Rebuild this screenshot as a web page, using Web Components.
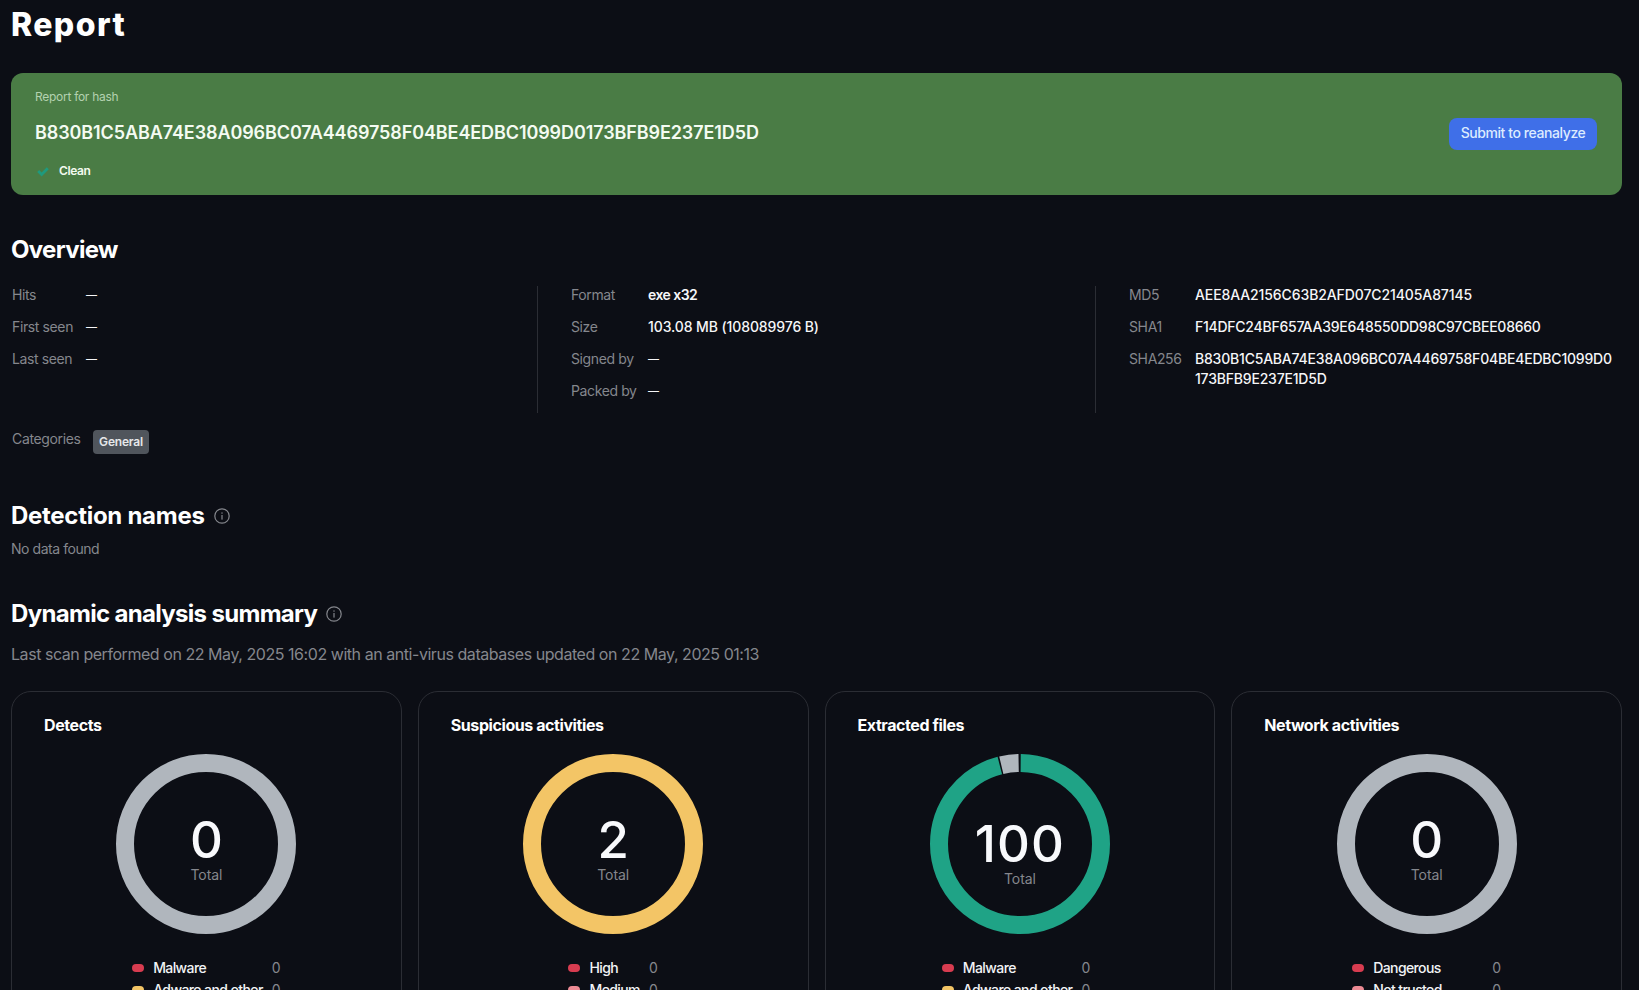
<!DOCTYPE html>
<html lang="en">
<head>
<meta charset="utf-8">
<title>Report</title>
<style>
  html, body { margin: 0; height: 990px; overflow: hidden; background: #0c0e15; }
  body { font-family: Inter, "Liberation Sans", sans-serif; color: #fff; }
</style>
</head>
<body>
<report-page>
  <report-banner slot="banner" hash="B830B1C5ABA74E38A096BC07A4469758F04BE4EDBC1099D0173BFB9E237E1D5D" status="Clean"></report-banner>

  <section-head style="--top:39px;--sp:-.68px">Overview</section-head>
  <kv-grid>
    <kv-col width="74" pad="1">
      <kv-row label="Hits" dash>—</kv-row>
      <kv-row label="First seen" dash>—</kv-row>
      <kv-row label="Last seen" dash>—</kv-row>
    </kv-col>
    <kv-col width="77" pad="33" divider>
      <kv-row label="Format" style="--sp:-.55px;--w:600">exe x32</kv-row>
      <kv-row label="Size">103.08 MB (108089976 B)</kv-row>
      <kv-row label="Signed by" dash>—</kv-row>
      <kv-row label="Packed by" dash>—</kv-row>
    </kv-col>
    <kv-col width="66" pad="33" divider>
      <kv-row label="MD5">AEE8AA2156C63B2AFD07C21405A87145</kv-row>
      <kv-row label="SHA1" style="--sp:-.25px">F14DFC24BF657AA39E648550DD98C97CBEE08660</kv-row>
      <kv-row label="SHA256" style="--sp:-.2px">B830B1C5ABA74E38A096BC07A4469758F04BE4EDBC1099D0<br>173BFB9E237E1D5D</kv-row>
    </kv-col>
  </kv-grid>
  <category-row label="Categories" tag="General"></category-row>

  <section-head info style="--top:46px;--sp:-.28px">Detection names</section-head>
  <muted-line style="--top:6.5px;--size:14px;--lh:20px;--sp:-.45px">No data found</muted-line>

  <section-head info style="--top:39px;--sp:-.68px">Dynamic analysis summary</section-head>
  <muted-line style="--top:12.5px;--size:16px;--lh:24px;--sp:-.45px">Last scan performed on 22 May, 2025 16:02 with an anti-virus databases updated on 22 May, 2025 01:13</muted-line>

  <card-grid>
    <stat-card heading="Detects">
      <donut-chart value="0" segments="#b0b6bd:0:360"></donut-chart>
      <legend-row color="#d83c50" label="Malware" value="0"></legend-row>
      <legend-row color="#f3c566" label="Adware and other" value="0"></legend-row>
    </stat-card>
    <stat-card heading="Suspicious activities">
      <donut-chart value="2" segments="#f3c566:0:360"></donut-chart>
      <legend-row color="#d83c50" label="High" value="0"></legend-row>
      <legend-row color="#ec8a94" label="Medium" value="0"></legend-row>
    </stat-card>
    <stat-card heading="Extracted files" value-min="16.5">
      <donut-chart value="100" shift segments="#1fa386:0.5:345.5,#b0b6bd:346.6:359"></donut-chart>
      <legend-row color="#d83c50" label="Malware" value="0"></legend-row>
      <legend-row color="#f3c566" label="Adware and other" value="0"></legend-row>
    </stat-card>
    <stat-card heading="Network activities" legend-min="110">
      <donut-chart value="0" segments="#b0b6bd:0:360"></donut-chart>
      <legend-row color="#d83c50" label="Dangerous" value="0"></legend-row>
      <legend-row color="#ec8a94" label="Not trusted" value="0"></legend-row>
    </stat-card>
  </card-grid>
</report-page>

<script>
const shadow = (el, html) => { el.attachShadow({ mode: 'open' }).innerHTML = html; };
const esc = s => String(s ?? '').replace(/&/g, '&amp;').replace(/</g, '&lt;');

customElements.define('report-page', class extends HTMLElement {
  constructor() {
    super();
    shadow(this, `<style>
      :host { display: block; padding: 5px 17px 0 11px; }
      h1 { margin: 0 0 28px; font-size: 32px; line-height: 40px; font-weight: 800; letter-spacing: 1.4px; color: #fff; }
    </style><h1>Report</h1><slot name="banner"></slot><slot></slot>`);
  }
});

customElements.define('report-banner', class extends HTMLElement {
  connectedCallback() {
    shadow(this, `<style>
      :host { display: flex; align-items: center; justify-content: space-between; height: 122px; box-sizing: border-box;
              padding: 0 25px 0 24px; background: #4a7c45; border-radius: 12px; }
      .label { font-size: 12px; line-height: 16px; color: #b4d2b0; letter-spacing: -.28px; }
      .hash { font-size: 18px; line-height: 24px; font-weight: 600; color: #f4fbf2; margin-top: 16px; letter-spacing: -.1px; }
      .status { display: flex; align-items: center; gap: 10px; margin-top: 18px; font-size: 12px; line-height: 16px; font-weight: 600; color: #f2faef; padding-left: 2px; letter-spacing: -.4px; }
      svg { display: block; }
      button { all: unset; box-sizing: border-box; height: 32px; width: 148px; padding-bottom: 3px; text-align: center; background: #3f6fe8; border-radius: 8px;
               font: 500 14px/20px Inter, "Liberation Sans", sans-serif; color: #dcebff; letter-spacing: -.42px; }
    </style>
    <div>
      <div class="label">Report for hash</div>
      <div class="hash">${esc(this.getAttribute('hash'))}</div>
      <div class="status"><svg width="12" height="12" viewBox="0 0 12 12"><path d="M1.2 6 4.6 9.4 10.8 3.2" fill="none" stroke="#1f9a7e" stroke-width="2.8"/></svg>${esc(this.getAttribute('status'))}</div>
    </div>
    <button>Submit to reanalyze</button>`);
  }
});

customElements.define('section-head', class extends HTMLElement {
  connectedCallback() {
    const icon = this.hasAttribute('info') ? `<svg width="16" height="16" viewBox="0 0 16 16"><circle cx="8" cy="8" r="7.2" fill="none" stroke="#85878d" stroke-width="1.2"/><rect x="7.4" y="7" width="1.2" height="4.6" fill="#85878d"/><rect x="7.4" y="4.4" width="1.2" height="1.3" fill="#85878d"/></svg>` : '';
    shadow(this, `<style>
      :host { display: flex; align-items: center; gap: 9px; margin-top: var(--top, 0); font-size: 24px; line-height: 32px; font-weight: 700; color: #fff; letter-spacing: var(--sp, 0); }
      svg { display: block; }
    </style><slot></slot>${icon}`);
  }
});

customElements.define('muted-line', class extends HTMLElement {
  constructor() {
    super();
    shadow(this, `<style>
      :host { display: block; margin-top: var(--top, 0); font-size: var(--size, 14px); line-height: var(--lh, 20px); letter-spacing: var(--sp, 0); color: #85878d; }
    </style><slot></slot>`);
  }
});

customElements.define('kv-grid', class extends HTMLElement {
  constructor() {
    super();
    shadow(this, `<style>
      :host { display: grid; grid-template-columns: 526px 558px 1fr; margin-top: 20px; height: 127px; }
    </style><slot></slot>`);
  }
});

customElements.define('kv-col', class extends HTMLElement {
  connectedCallback() {
    const d = this.hasAttribute('divider');
    this.style.setProperty('--label-w', this.getAttribute('width') + 'px');
    shadow(this, `<style>
      :host { display: block; box-sizing: border-box; padding-left: ${this.getAttribute('pad')}px; ${d ? 'border-left: 1px solid #2b2d34;' : ''} }
      div { margin-top: -1px; }
    </style><div><slot></slot></div>`);
  }
});

customElements.define('kv-row', class extends HTMLElement {
  connectedCallback() {
    const dash = this.hasAttribute('dash');
    shadow(this, `<style>
      :host { display: grid; grid-template-columns: var(--label-w) 1fr; padding-bottom: 12px; font-size: 14px; line-height: 20px; }
      .l { color: #85878d; letter-spacing: -.38px; }
      .v { color: #f6f6f8; font-weight: var(--w, 500); letter-spacing: var(--sp, -.1px); white-space: nowrap; ${dash ? 'font-size: 11px;' : ''} }
    </style><span class="l">${esc(this.getAttribute('label'))}</span><span class="v"><slot></slot></span>`);
  }
});

customElements.define('category-row', class extends HTMLElement {
  connectedCallback() {
    shadow(this, `<style>
      :host { display: flex; align-items: flex-start; margin-top: 17px; padding-left: 1px; height: 24px; }
      .l { font-size: 14px; line-height: 20px; color: #85878d; width: 81px; margin-top: -1px; letter-spacing: -.35px; }
      .t { box-sizing: border-box; height: 24px; width: 56px; text-align: center; background: #50555c; border-radius: 4px;
           font-size: 12px; line-height: 24px; font-weight: 600; color: #e6e8ea; letter-spacing: -.2px; }
    </style><span class="l">${esc(this.getAttribute('label'))}</span><span class="t">${esc(this.getAttribute('tag'))}</span>`);
  }
});

customElements.define('card-grid', class extends HTMLElement {
  constructor() {
    super();
    shadow(this, `<style>
      :host { display: grid; grid-template-columns: repeat(4, 1fr); gap: 16px; margin-top: 24.5px; }
    </style><slot></slot>`);
  }
});

customElements.define('stat-card', class extends HTMLElement {
  connectedCallback() {
    const min = this.getAttribute('legend-min') || 0;
    const vmin = this.getAttribute('value-min') || 0;
    shadow(this, `<style>
      :host { display: flex; flex-direction: column; align-items: center; box-sizing: border-box; min-height: 400px;
              padding: 21.5px 32px 24px; border: 1px solid #2b2d34; border-radius: 20px; }
      h2 { margin: 0; align-self: stretch; font-size: 16px; line-height: 24px; font-weight: 700; color: #fff; letter-spacing: -.42px; }
      .legend { display: grid; grid-template-columns: 12px minmax(${min}px, auto) minmax(${vmin}px, auto); column-gap: 9px; margin-top: 23px; }
    </style><h2>${esc(this.getAttribute('heading'))}</h2><slot name="chart"></slot><div class="legend"><slot></slot></div>`);
    const chart = this.querySelector('donut-chart');
    if (chart) chart.slot = 'chart';
  }
});

customElements.define('donut-chart', class extends HTMLElement {
  connectedCallback() {
    const arcs = (this.getAttribute('segments') || '').split(',').map(s => {
      const [c, a, b] = s.split(':');
      const from = +a, to = +b;
      return `<circle cx="90" cy="90" r="81" fill="none" stroke="${c}" stroke-width="18" pathLength="360"
        stroke-dasharray="${to - from} ${360 - (to - from)}" stroke-dashoffset="${-from}" transform="rotate(-90 90 90)"/>`;
    }).join('');
    const shift = this.hasAttribute('shift');
    shadow(this, `<style>
      :host { display: block; position: relative; width: 180px; height: 180px; margin-top: 16.5px; }
      svg { display: block; }
      .c { position: absolute; inset: 0; display: flex; flex-direction: column; align-items: center; padding-top: ${shift ? 65 : 61}px; box-sizing: border-box; }
      .n { font-size: 51px; line-height: 50px; font-weight: 500; color: #f8f9fc; letter-spacing: ${shift ? 1 : 0}px; }
      .t { font-size: 14px; line-height: 20px; color: #85878d; letter-spacing: -.1px; }
    </style><svg width="180" height="180" viewBox="0 0 180 180">${arcs}</svg>
    <div class="c"><div class="n">${esc(this.getAttribute('value'))}</div><div class="t">Total</div></div>`);
  }
});

customElements.define('legend-row', class extends HTMLElement {
  connectedCallback() {
    shadow(this, `<style>
      :host { display: contents; }
      i { align-self: center; display: block; width: 12px; height: 8px; border-radius: 4px; background: ${this.getAttribute('color')}; }
      .l { font-size: 14px; line-height: 22px; font-weight: 500; color: #f2f3f5; white-space: nowrap; letter-spacing: -.6px; }
      .v { font-size: 14px; line-height: 22px; color: #85878d; }
    </style><i></i><span class="l">${esc(this.getAttribute('label'))}</span><span class="v">${esc(this.getAttribute('value'))}</span>`);
  }
});
</script>
</body>
</html>
